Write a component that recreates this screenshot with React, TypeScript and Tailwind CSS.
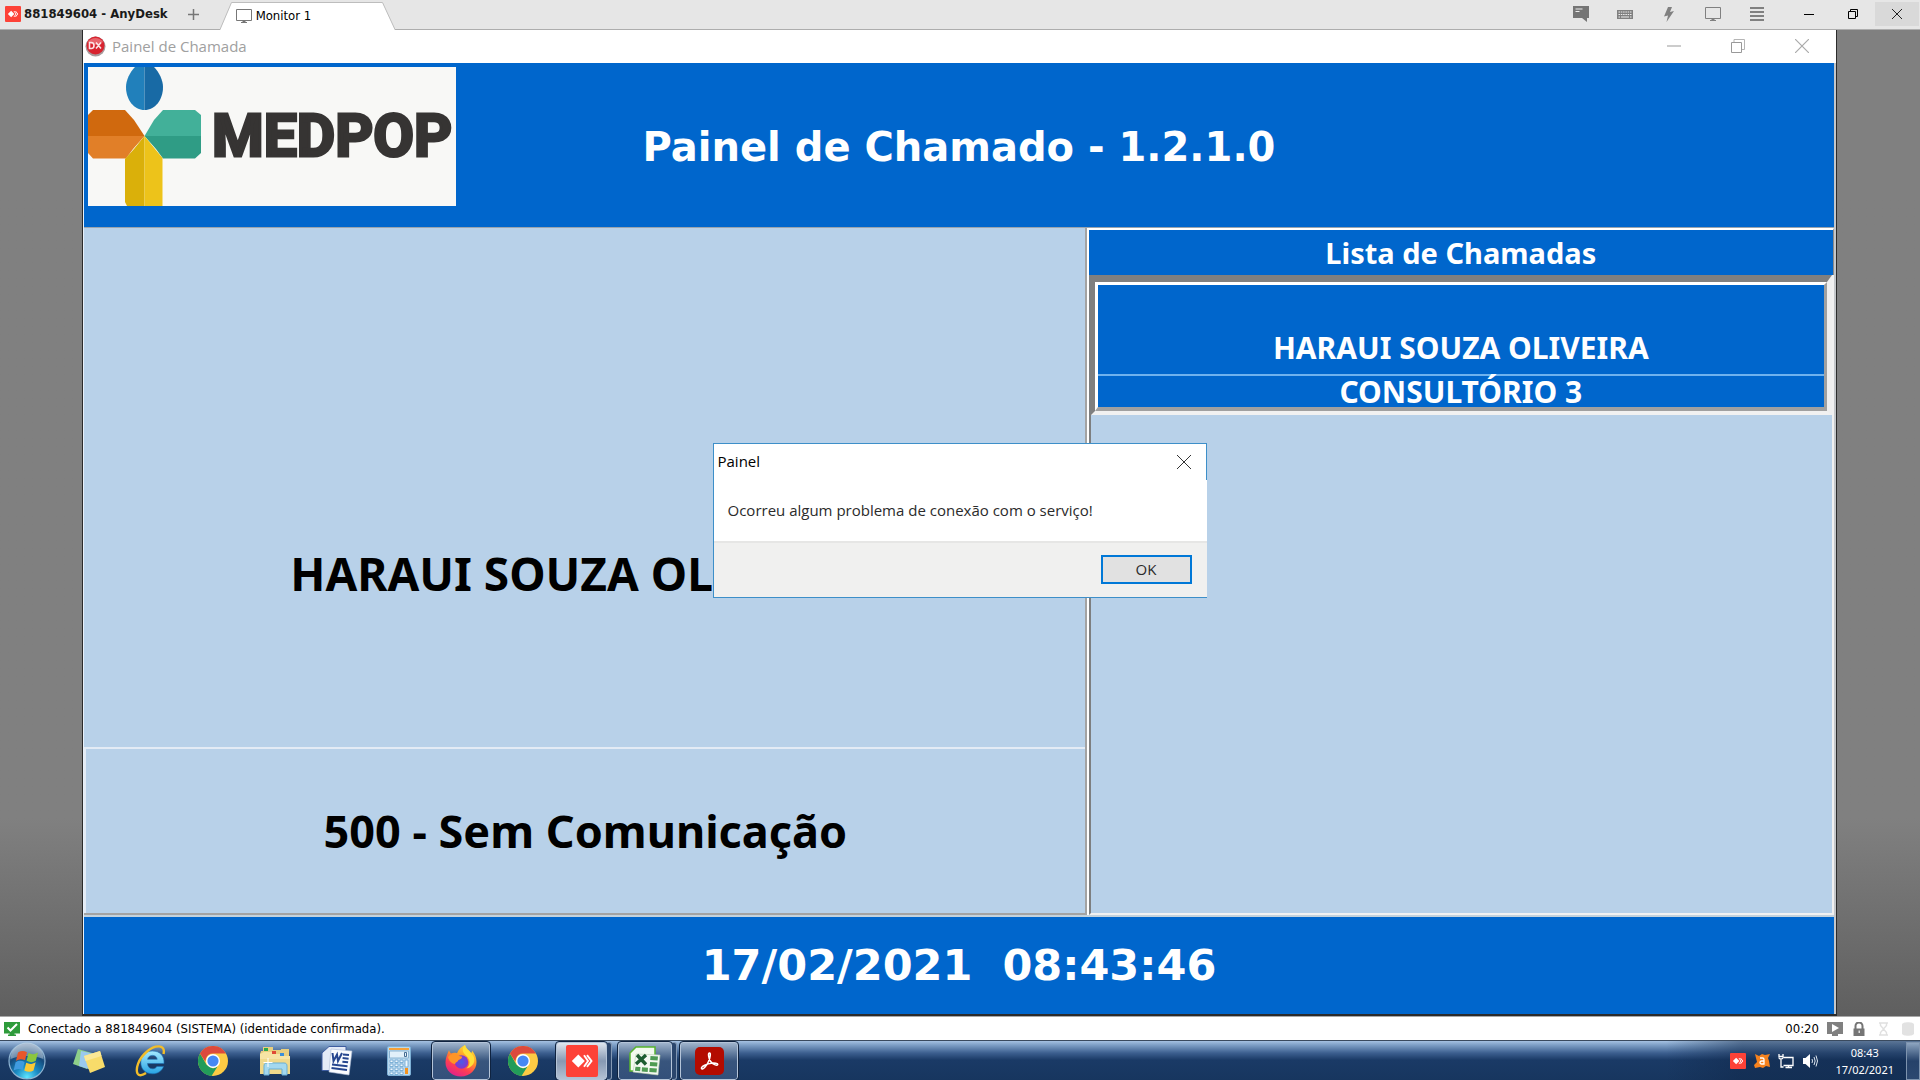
import type { ReactNode } from 'react';

const tahoma = "font-['DejaVu_Sans_Condensed','DejaVu_Sans',sans-serif]";
const tahomaBold = "font-['Noto_Sans','Open_Sans',sans-serif]";
const verdana = "font-['DejaVu_Sans',sans-serif]";
const segoe = "font-['Open_Sans','Noto_Sans',sans-serif]";

function AnyDeskMark({ size }: { size: number }) {
  return (
    <svg width={size} height={size} viewBox="0 0 32 32" aria-hidden="true">
      <rect width="32" height="32" rx="2" fill="#fd4237" />
      <path d="M12.3 9.5 18.8 16l-6.5 6.5L5.800 16z" fill="#fff" />
      <path d="m18 10.200 4 5.800-4 5.800M21 10.200l4.500 5.800-4.500 5.800" fill="none" stroke="#fff" strokeWidth="1.900" />
    </svg>
  );
}

function MonitorIcon({ color }: { color: string }) {
  return (
    <svg width="16" height="14" viewBox="0 0 16 14" fill="none" stroke={color} aria-hidden="true">
      <path d="M.5.5h15v11H.5zM5 13.5h6M8 11.500v2" />
      <path d="M6.500 12.500h3" />
    </svg>
  );
}

/* ---------- AnyDesk bar ---------- */

function BarButton({ label, children, active }: { label: string; children: ReactNode; active?: boolean }) {
  return (
    <button aria-label={label} className={active ? 'flex h-6 w-11 items-center justify-center bg-[#d9d9d9]' : 'flex h-6 w-11 items-center justify-center'}>
      {children}
    </button>
  );
}

function AnyDeskBar() {
  return (
    <header className={`flex h-[30px] shrink-0 border-b border-[#adadad] bg-[#e6e6e6] text-[13px] text-[#1a1a1a] ${tahoma}`}>
      <div className="flex h-[27px] items-center gap-[3px] pl-[5px] font-bold">
        <AnyDeskMark size={16} />
        <span className="whitespace-nowrap">881849604 - AnyDesk</span>
      </div>
      <button aria-label="Nova sessão" className="flex w-[52px] items-center justify-center">
        <svg width="11" height="11" viewBox="0 0 11 11" stroke="#777" strokeWidth="1.500" aria-hidden="true"><path d="M5.500 0v11M0 5.500h11" /></svg>
      </button>
      <button className="relative h-[30px] w-[175px] text-black">
        <svg className="absolute inset-x-0 bottom-0" width="175" height="28" viewBox="0 0 175 28" aria-hidden="true">
          <path d="M0 28 11.500.5h151L175 28z" fill="#fff" />
          <path d="M0 27.500 11.500.5h151L175 27.500" fill="none" stroke="#bdbdbd" />
        </svg>
        <span className="relative flex items-center gap-1 pt-0.5 pl-4">
          <MonitorIcon color="#777" />
          Monitor 1
        </span>
      </button>
      <div className="ml-auto flex gap-2 pt-0.5 pr-px">
        <div className="flex">
          <BarButton label="Conversa">
            <svg width="16" height="16" viewBox="0 0 16 16" aria-hidden="true">
              <path d="M0 0h16v12h-2v4l-5-4H0z" fill="#757575" />
              <path d="M2.500 3h7M2.500 5.500h4" stroke="#eee" />
            </svg>
          </BarButton>
          <BarButton label="Teclado">
            <svg width="16" height="9" viewBox="0 0 16 9" aria-hidden="true">
              <path d="M0 0h16v9H0z" fill="#808080" />
              <path d="M1.500 2h13M1.500 4.500h13" stroke="#eee" strokeDasharray="1.500 .8" />
              <path d="M1.500 7h1.500M4 7h8M13 7h1.500" stroke="#eee" />
            </svg>
          </BarButton>
          <BarButton label="Ações">
            <svg width="10" height="15" viewBox="0 0 10 15" aria-hidden="true"><path d="M4 0h4L6 5l4-1-7.500 11L4 8.500 0 9.500z" fill="#808080" /></svg>
          </BarButton>
          <BarButton label="Monitor"><MonitorIcon color="#808080" /></BarButton>
          <BarButton label="Menu">
            <svg width="14" height="14" viewBox="0 0 14 14" stroke="#808080" strokeWidth="2" aria-hidden="true"><path d="M0 1h14M0 5h14M0 9h14M0 13h14" /></svg>
          </BarButton>
        </div>
        <div className="flex">
          <BarButton label="Minimizar">
            <svg width="10" height="10" viewBox="0 0 10 10" stroke="#000" aria-hidden="true"><path d="M0 5.500h10" /></svg>
          </BarButton>
          <BarButton label="Restaurar">
            <svg width="10" height="10" viewBox="0 0 10 10" fill="none" stroke="#000" aria-hidden="true"><path d="M.5 2.500h7v7h-7zM2.500 2.500v-2h7v7h-2" /></svg>
          </BarButton>
          <BarButton label="Fechar" active>
            <svg width="10" height="10" viewBox="0 0 10 10" stroke="#222" aria-hidden="true"><path d="m0 0 10 10M10 0 0 10" /></svg>
          </BarButton>
        </div>
      </div>
    </header>
  );
}

/* ---------- Remote window ---------- */

function WindowTitle() {
  const btn = 'flex w-16 items-center justify-center';
  return (
    <div className={`flex h-[33px] shrink-0 bg-white pb-px ${segoe}`}>
      <div className="flex items-center gap-1.5 pl-0.5 text-[15px] text-[#a0a0a0]">
        <svg width="21" height="21" viewBox="0 0 21 21" aria-hidden="true">
          <circle cx="10.500" cy="10.500" r="10" fill="#a89a9c" />
          <circle cx="10.500" cy="9.500" r="9" fill="#d8232f" />
          <path d="M3 6a9 9 0 0 1 15 0 12 12 0 0 1-15 0" fill="#e8636b" />
          <path d="M4.500 6.500v6h1.800c3.600 0 3.600-6 0-6zM11 6.500l5 6M16 6.500l-5 6" fill="none" stroke="#fbe3e5" strokeWidth="1.600" />
        </svg>
        Painel de Chamada
      </div>
      <div className="ml-auto flex pr-0.5">
        <button aria-label="Minimizar" className={btn}><svg width="14" height="14" viewBox="0 0 14 14" aria-hidden="true"><path d="M0 7h14" stroke="#ccc" strokeWidth="2" /></svg></button>
        <button aria-label="Restaurar" className={btn}>
          <svg width="14" height="14" viewBox="0 0 14 14" fill="none" aria-hidden="true"><path d="M3 3V.5h10.500v10H11" stroke="#b5b5b5" /><path d="M.5 3.500h10v10H.5z" stroke="#999" /></svg>
        </button>
        <button aria-label="Fechar" className={btn}><svg width="14" height="14" viewBox="0 0 14 14" stroke="#aaa" strokeWidth="1.200" aria-hidden="true"><path d="m0 0 14 14M14 0 0 14" /></svg></button>
      </div>
    </div>
  );
}

function MedpopLogo() {
  return (
    <div className="flex h-[139px] w-[368px] items-start bg-[#f8f8f6]">
      <svg width="114" height="139" viewBox="0 0 114 139" className="shrink-0" aria-hidden="true">
        <path d="M47 0h9.500v43C46 43 38 33 38 20c0-7 4-15 9-20" fill="#2180bb" />
        <path d="M56.500 0H66c5 5 9 13 9 20 0 13-8 23-18.500 23z" fill="#186aa5" />
        <path d="M0 69V48l5-5h32l9 10 10.500 16z" fill="#d0690e" />
        <path d="M0 69h56.500L45 82l-7 9.500H5L0 86z" fill="#e17f28" />
        <path d="M56.500 69 66 53l9-10h32l6 5v21z" fill="#42b099" />
        <path d="M56.500 69H113v17l-6 5.500H75L68 82z" fill="#2f9c85" />
        <path d="M56.500 69v70H39l-2-4V92l9-10z" fill="#dab00a" />
        <path d="M56.500 69v70h18V91L67 82z" fill="#edc31a" />
      </svg>
      <span className="ml-2.5 pt-[33px] font-['Roboto',sans-serif] text-[59px] leading-[72px] font-bold text-[#363433] [-webkit-text-stroke:3px_#363433]">MEDPOP</span>
    </div>
  );
}

function CallPanel() {
  return (
    <section className="flex flex-col border-r-2 border-b-2 border-[#a3a3a3] bg-[#b8d1e9] font-bold text-black">
      <div className="flex flex-1 items-end justify-center pr-3 pb-[146px]">
        <p className="text-[46px] leading-[56px] whitespace-nowrap">HARAUI SOUZA OLIVEIRA</p>
      </div>
      <div className="flex h-[166px] items-center justify-center border-t-2 border-l-2 border-[#e3ebf5]">
        <p className="text-[45px] leading-[56px] whitespace-nowrap">500 - Sem Comunicação</p>
      </div>
    </section>
  );
}

function CallList() {
  return (
    <section className="flex flex-col border-l-2 border-white text-center font-bold text-white">
      <h2 className="h-[47px] border-t-2 border-r border-t-white border-r-[#8a8a8a] bg-[#0066cc] text-[29px] leading-[45px]">Lista de Chamadas</h2>
      <div className="flex flex-1 flex-col border-r-2 border-b-2 border-l-2 border-[#f1f1f1] border-l-[#7d7f80] bg-[#b8d1e9]">
        <div className="border-t-[7px] border-r-[5px] border-b-4 border-l-[4px] border-t-[#7f7f7f] border-r-[#efefef] border-b-[#f1f1f1] border-l-[#7f7f7f]">
          <div className="border-t-[3px] border-r-[3px] border-b-4 border-l-[3px] border-t-white border-r-[#a0a0a0] border-b-[#a0a0a0] border-l-white bg-[#0066cc] text-[30px]">
            <p className="flex h-[89px] items-end justify-center pb-2 leading-9">HARAUI SOUZA OLIVEIRA</p>
            <p className="border-t-2 border-[#6fb2ee] leading-[31px]">CONSULTÓRIO 3</p>
          </div>
        </div>
      </div>
    </section>
  );
}

function ErrorDialog() {
  return (
    <div className="absolute inset-0 flex items-center justify-center pb-[3px]">
      <div role="dialog" aria-labelledby="dlg-title" aria-describedby="dlg-text" className={`w-[494px] border-y border-l border-[#3d8fc9] bg-white text-[#2b2b2b] ${segoe}`}>
        <div className="flex h-9 items-center justify-between border-r border-[#3d8fc9] pr-[15px] pb-px pl-1">
          <h3 id="dlg-title" className="text-[15px] text-black">Painel</h3>
          <button aria-label="Fechar"><svg width="14" height="14" viewBox="0 0 14 14" stroke="#333" aria-hidden="true"><path d="m0 0 14 14M14 0 0 14" /></svg></button>
        </div>
        <p id="dlg-text" className="h-[61px] px-3.5 text-[15px] leading-[61px] whitespace-nowrap">Ocorreu algum problema de conexão com o serviço!</p>
        <div className="flex h-14 items-start justify-end border-t-2 border-[#e6e6e5] bg-[#f0f0ef] pt-3 pr-[15px]">
          <button className="h-[29px] w-[91px] border-2 border-[#0078d7] bg-[#e1e1e1] text-[15px] leading-[25px]">OK</button>
        </div>
      </div>
    </div>
  );
}

function RemoteWindow() {
  return (
    <main className="flex flex-1 bg-linear-to-b from-[#808080] from-80% to-[#5f5f5f] pr-[83px] pl-[82px]">
      <div className={`relative flex flex-1 flex-col border-x border-b-2 border-[#2b2b2b] bg-white ${tahomaBold}`}>
        <WindowTitle />
        <div className="flex flex-1 flex-col border-r-2 border-l border-r-[#c4c7ca] border-l-[#e8f1fa]">
          <div className="grid h-[164px] grid-cols-[1fr_auto_1fr] items-center bg-[#0066cc]">
            <div className="self-start pt-1 pl-1"><MedpopLogo /></div>
            <h1 className={`pt-1 text-[40px] leading-[48px] font-bold text-white ${verdana}`}>Painel de Chamado - 1.2.1.0</h1>
          </div>
          <div className="grid flex-1 grid-cols-[1002fr_747fr] border-t border-b-2 border-t-[#9aa4ae] border-b-[#c3d2dd]">
            <CallPanel />
            <CallList />
          </div>
          <div className={`flex h-[97px] items-center justify-center bg-[#0066cc] text-[43px] font-bold whitespace-pre text-white ${verdana}`}>
            <time>17/02/2021  08:43:46</time>
          </div>
        </div>
        <ErrorDialog />
      </div>
    </main>
  );
}

/* ---------- Session status ---------- */

function StatusBar() {
  return (
    <div className={`flex h-6 shrink-0 items-center border-t border-[#a8a8a8] bg-white text-[13px] text-black ${tahoma}`}>
      <svg className="ml-1" width="16" height="14" viewBox="0 0 16 14" aria-hidden="true">
        <path d="M0 0h16v11.500h-5.500v1H12V14H4v-1.500h1.500v-1H0z" fill="#2e9b3b" />
        <path d="m3.500 5.500 3 3L13 2" fill="none" stroke="#fff" strokeWidth="2" />
      </svg>
      <span className="ml-2 whitespace-nowrap">Conectado a 881849604 (SISTEMA) (identidade confirmada).</span>
      <div className="ml-auto flex items-center pr-1.5">
        <span>00:20</span>
        <svg className="ml-2" width="16" height="14" viewBox="0 0 16 14" aria-hidden="true">
          <path d="M0 0h16v12h-5v2H5v-2H0z" fill="#808080" /><path d="M5 2v8l7-4z" fill="#fff" />
        </svg>
        <svg className="ml-2.5" width="12" height="14" viewBox="0 0 12 14" aria-hidden="true">
          <path d="M2.500 7V4a3.500 3.500 0 0 1 7 0v3" fill="none" stroke="#757575" strokeWidth="2" />
          <path d="M.5 6.500h11V14H.5z" fill="#757575" /><path d="M5.500 8.500h1.500V11H5.500z" fill="#ddd" />
        </svg>
        <svg className="ml-3.5" width="9" height="14" viewBox="0 0 9 14" fill="none" stroke="#e0e0e0" strokeWidth="1.400" aria-hidden="true">
          <path d="M0 1h9M0 13h9M1.500 1v2.500l3 3.500 3-3.500V1M1.500 13v-2.500l3-3.500 3 3.500V13" />
        </svg>
        <svg className="ml-3.5" width="12" height="14" viewBox="0 0 12 14" fill="#e2e2e2" aria-hidden="true">
          <path d="M0 2.500C0-.5 12-.5 12 2.500v9c0 3-12 3-12 0z" />
        </svg>
      </div>
    </div>
  );
}

/* ---------- Taskbar ---------- */

function StartOrb() {
  return (
    <svg width="38" height="38" viewBox="0 0 38 38" aria-hidden="true">
      <defs>
        <radialGradient id="orb" cx=".5" cy=".95" r=".9">
          <stop offset="0" stopColor="#5fe6ff" /><stop offset=".35" stopColor="#1b8cc4" /><stop offset=".7" stopColor="#154a7c" /><stop offset="1" stopColor="#7d99b8" />
        </radialGradient>
      </defs>
      <circle cx="19" cy="19" r="18" fill="url(#orb)" stroke="#8fb4d2" strokeWidth="1.200" />
      <path d="M2.500 17a16.500 16.500 0 0 1 33 0c-9-4-24-4-33 0" fill="#fff" opacity=".35" />
      <path d="M10 10.500c3-2 6-1.800 9-.2l-2 8c-3-1.600-6-1.600-9 .4z" fill="#e8562a" />
      <path d="M20.500 11c3 1.600 6 1.600 9.500-.6l-2.200 8.400c-3 2-6 1.700-9.200 0z" fill="#8cc63e" />
      <path d="M7.600 20.300c3-2 6-1.800 9-.2l-2 8c-3-1.600-6-1.600-9 .4z" fill="#3f9be0" />
      <path d="M18.200 20.800c3 1.600 6 1.600 9.500-.6l-2.200 8.200c-3 2-6 1.700-9.200 0z" fill="#fcc934" />
    </svg>
  );
}

function StickyNotes() {
  return (
    <svg width="34" height="28" viewBox="0 0 34 28" aria-hidden="true">
      <path d="m6 2 14 4-5 16-14-5z" fill="#8ed08a" />
      <path d="m9 4 14 3-3 16-13-4z" fill="#9ac9ee" />
      <path d="m12 9 16-5 5 16-15 6z" fill="#f8dc6a" />
      <path d="m12 9 16-5 1.500 5L13.500 14z" fill="#fbe896" />
    </svg>
  );
}

function ExplorerE() {
  return (
    <svg width="32" height="32" viewBox="0 0 32 32" aria-hidden="true">
      <defs><linearGradient id="ie" x2="0" y2="1"><stop stopColor="#a5e9ff" /><stop offset="1" stopColor="#27a4e4" /></linearGradient></defs>
      <path d="M29 18.500H12.500c.2 3.300 2.200 5.300 5 5.300 2 0 3.500-.8 4.300-2.300h6.700c-1.600 4.600-5.700 7.300-11 7.300-7 0-11.700-4.500-11.700-11.200C5.800 10.600 10.500 6 17.300 6 25 6 29.500 10.800 29 18.500m-6.800-4.200c-.3-2.400-2-3.900-4.700-3.900s-4.500 1.500-4.900 3.900z" fill="url(#ie)" stroke="#1b6fb4" strokeWidth=".6" />
      <path d="M28.500 9C31-1 20-.5 12 6.500 3 14 .5 24 2.500 28.500 4 31.500 8 30 11 28" fill="none" stroke="#f2bd2a" strokeWidth="2.400" />
    </svg>
  );
}

function Chrome() {
  return (
    <svg width="30" height="30" viewBox="0 0 30 30" aria-hidden="true">
      <circle cx="15" cy="15" r="15" fill="#fdcb44" />
      <path d="M2 7.500 8.500 18.800 15 22.500 19.500 20.500 13.500 30A15 15 0 0 1 2 7.500" fill="#229c5a" />
      <path d="M2 7.500A15 15 0 0 1 28 7.500H15A7.500 7.500 0 0 0 8 12.500l-.8 3z" fill="#dd4a3c" />
      <circle cx="15" cy="15" r="7" fill="#fff" />
      <circle cx="15" cy="15" r="5.600" fill="#4688f4" />
    </svg>
  );
}

function Folder() {
  return (
    <svg width="32" height="30" viewBox="0 0 32 30" aria-hidden="true">
      <path d="M2 5h2V1h10v3h8V3h8v25H1V8z" fill="#e9cf7e" />
      <path d="M5 6h9l2 2h7l1 2h7v18H1V8z" fill="#f6e4a4" />
      <path d="M5 2h4v3H5z" fill="#2ba84a" /><path d="M13 5h4v3h-4z" fill="#e04a35" /><path d="M21 7h4v3h-4z" fill="#3b8fd8" />
      <path d="M1 13h30v15H1z" fill="#f0d98b" />
      <path d="M5 29V20c0-2 1-3 3-3h17c2 0 3 1 3 3v9h-5v-6H10v6z" fill="#a3d8ef" stroke="#68afd5" />
      <path d="M9 12v9M4.500 16.500h9" stroke="#fff" />
    </svg>
  );
}

function Word() {
  return (
    <svg width="32" height="30" viewBox="0 0 32 30" aria-hidden="true">
      <path d="M8 .5h17v24H1V7z" fill="#e4ebf7" stroke="#3e5da0" />
      <path d="m10 3 21 2-3 24-20-3z" fill="#fafcff" stroke="#a9b8d4" strokeWidth=".6" />
      <path d="m11.500 7 1 8 3.500-6.500 1 6.500 4-8" fill="none" stroke="#26468f" strokeWidth="2" />
      <path d="m22 8.500 6 .6m-6.400 3 6 .6m-6.200 3 5.700.6M11 18.500l15.500 1.800M10.500 22l15.500 2" stroke="#26468f" strokeWidth="2" />
    </svg>
  );
}

function Calculator() {
  const keys = [14, 18, 22, 26];
  return (
    <svg width="24" height="30" viewBox="0 0 24 30" aria-hidden="true">
      <rect x=".5" y=".5" width="23" height="29" rx="1.500" fill="#b9d8ee" stroke="#7db0d6" />
      <path d="M2 2h20v2H2z" fill="#f4a13a" />
      <path d="M2.500 5h19v7h-19z" fill="#e2f0fa" stroke="#8ab4d4" />
      <path d="M17.500 6.500h2v4h-2z" fill="none" stroke="#456b92" />
      {keys.map((y) => <path key={y} d={`M3 ${y}h3v2.500H3zM8 ${y}h3v2.500H8zM13 ${y}h3v2.500h-3z`} fill="#eef7fd" stroke="#6ba3cf" strokeWidth=".8" />)}
      <path d="M18 14h3v7h-3z" fill="#eef7fd" stroke="#6ba3cf" strokeWidth=".8" /><path d="M18 22h3v6h-3z" fill="#f4931f" />
    </svg>
  );
}

function Firefox() {
  return (
    <svg width="32" height="32" viewBox="0 0 32 32" aria-hidden="true">
      <defs>
        <linearGradient id="ffx" x1=".8" y1="0" x2=".3" y2="1"><stop stopColor="#ffe93b" /><stop offset=".4" stopColor="#ff9a26" /><stop offset=".7" stopColor="#ff3f52" /><stop offset="1" stopColor="#e0208c" /></linearGradient>
        <radialGradient id="ffp"><stop stopColor="#4c5ae8" /><stop offset="1" stopColor="#8a35c9" /></radialGradient>
      </defs>
      <path d="M20 0c1 4 4 5 6 8 1-.5 1-1.500 1-2.500 3 3.500 4.500 7.500 4.500 11.500 0 8-6.800 14.500-15.500 14.500S.5 25.500.5 17.500C.5 13 2 10 4 5c.5 1.500 1 2.500 2 3.500 2-.8 4-.8 6-.2C13.500 4.500 16.500 1.500 20 0" fill="url(#ffx)" />
      <circle cx="16.500" cy="17" r="6.800" fill="url(#ffp)" />
      <path d="M3 12c2-2.500 5-3.500 8-2.500 2 .8 3.500 2 6 2 .5 1.500-1 2.500-3.500 3.500-.5 2-3 2-3.500 4C7 19 4 16 3 12" fill="#ff9526" />
      <path d="M20 0c-4 4-2 8 1.500 11 4 3.500 4 9 0 12.500 9-2 10-11 4.500-15.500-2-3-5-4-6-8" fill="#ffdf38" />
    </svg>
  );
}

function Excel() {
  return (
    <svg width="32" height="30" viewBox="0 0 32 30" aria-hidden="true">
      <path d="M7 1h19v24H1V7z" fill="#f3faef" stroke="#58b52f" strokeWidth="1.500" />
      <path d="m7 8 24 1-2 20-25-3z" fill="#f4f8f2" stroke="#b9d2ae" strokeWidth=".6" />
      <path d="m21.500 10 7.500.4-.4 4-7.400-.4zm-.4 6 7.400.5-.4 4-7.300-.5zm-.5 6 7.300.6-.4 4-7.200-.6zM13 21.300l6 .5-.3 4.200-6-.6zm-6.500-.6 5 .4-.4 4.100-5.200-.5z" fill="#4e9b53" />
      <path d="m8 9 9 9.500M17 9l-10 9" stroke="#1d5c30" strokeWidth="3.400" />
    </svg>
  );
}

function Acrobat() {
  return (
    <svg width="29" height="28" viewBox="0 0 29 28" aria-hidden="true">
      <rect width="29" height="28" rx="5" fill="#b30b00" />
      <path d="M6.500 21.500c-.8-2 6-5 10-5.300 3-.3 6.500 0 6.300 1.300-.3 2-5.500-.5-7.500-3.500-1.600-2.500-2.500-7.500-1-8 1.800-.5 1 4.500-.8 8.500-1.700 4-5.700 9-7 7z" fill="none" stroke="#fff" strokeWidth="1.500" />
    </svg>
  );
}

function Pinned({ label, children }: { label: string; children: ReactNode }) {
  return <button aria-label={label} className="flex h-full w-[62px] shrink-0 items-center justify-center">{children}</button>;
}

function Running({ label, width, bright, children }: { label: string; width: string; bright?: boolean; children: ReactNode }) {
  const fill = bright ? 'from-[#dfe6ee] via-[#8799b3] to-[#b4c2d4]' : 'from-[#9fb4cc] via-[#38557d] to-[#33507a]';
  return (
    <button aria-label={label} className={`flex h-[38px] shrink-0 items-center justify-center rounded-[3px] border border-[#b4c4d8] bg-linear-to-b outline outline-[#0f2340] ${fill} ${width}`}>
      {children}
    </button>
  );
}

function StackEdge() {
  return <span className="h-[38px] w-[5px] shrink-0 rounded-r-[3px] border-y border-r border-[#8398b3] bg-[#2b466d]" />;
}

function Taskbar() {
  return (
    <footer className="flex h-10 shrink-0 items-center border-t border-[#3a4a5e] bg-[linear-gradient(to_bottom,#a5c1e2_0px,#7e9fc6_4px,#3c5f8f_12px,#1a3a66_19px,#17365f_100%)]">
      <div className="flex w-[58px] shrink-0 items-center pl-2"><StartOrb /></div>
      <Pinned label="Notas autoadesivas"><StickyNotes /></Pinned>
      <Pinned label="Internet Explorer"><ExplorerE /></Pinned>
      <Pinned label="Google Chrome"><Chrome /></Pinned>
      <Pinned label="Explorador de arquivos"><Folder /></Pinned>
      <Pinned label="Word"><Word /></Pinned>
      <Pinned label="Calculadora"><Calculator /></Pinned>
      <div className="ml-0.5 flex items-center">
        <Running label="Firefox" width="w-[58px]"><Firefox /></Running>
        <div className="ml-0.5"><Pinned label="Chrome"><Chrome /></Pinned></div>
        <div className="ml-0.5 flex">
          <Running label="AnyDesk" width="w-[51px]" bright><AnyDeskMark size={32} /></Running>
          <StackEdge />
        </div>
        <div className="ml-1.5 flex">
          <Running label="Excel" width="w-[54px]"><Excel /></Running>
          <StackEdge />
        </div>
        <div className="ml-[3px]"><Running label="Acrobat" width="w-[58px]"><Acrobat /></Running></div>
      </div>
      <div className="ml-auto flex h-full items-center bg-linear-to-r from-transparent to-[#10284a]/50 to-30%">
        <div className="flex items-center gap-2 pl-16">
          <AnyDeskMark size={16} />
          <svg width="16" height="16" viewBox="0 0 16 16" aria-hidden="true">
            <path d="M1 1l4 2 3-2 3 1 5-1-2 4 1 3 1 6-4-1-3 2-3-1-5 1-1-3 3-3-1-4z" fill="#f5821f" />
            <path d="M6 5h2.500q1.500 0 1.500 1.500V11H7.500a1.500 1.500 0 0 1 0-3H10" fill="none" stroke="#fff" strokeWidth="1.300" />
          </svg>
          <svg width="16" height="16" viewBox="0 0 16 16" fill="none" stroke="#fff" strokeWidth="1.300" aria-hidden="true">
            <path d="M5.500 4.500H15v8H5.500M7.500 14.500H14M10.500 12.500v2M3 6v8h2.500M1 1v2.500h4V1M1 4.500C1 6.500 5 6.500 5 4.500" />
          </svg>
          <svg width="16" height="16" viewBox="0 0 16 16" aria-hidden="true">
            <path d="M1 5h2.500L8 1v14l-4.500-4H1z" fill="#fff" />
            <path d="M10 6q1 2 0 4M12 4q2.300 4 0 8M14 2.500q3 5.500 0 11" fill="none" stroke="#dfe7f0" />
          </svg>
        </div>
        <div className="ml-[17px] text-center font-['Noto_Sans',sans-serif] text-[11px] leading-[17px] text-white">
          <div>08:43</div>
          <div>17/02/2021</div>
        </div>
        <button aria-label="Mostrar área de trabalho" className="ml-3 h-[38px] w-3.5 border border-[#7d93ae] bg-linear-to-b from-[#8ea5c0] via-[#26426a] to-[#2c4870]" />
      </div>
    </footer>
  );
}

export default function App() {
  return (
    <div className="flex min-h-screen flex-col overflow-hidden">
      <AnyDeskBar />
      <RemoteWindow />
      <StatusBar />
      <Taskbar />
    </div>
  );
}
